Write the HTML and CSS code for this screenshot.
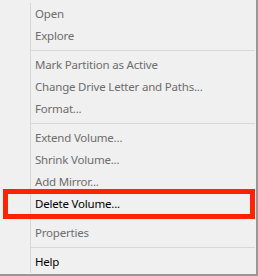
FILE: index.html
```html
<!DOCTYPE html>
<html>
<head>
<meta charset="utf-8">
<link rel="stylesheet" href="styles.css">
</head>
<body>
<div class="menu">
  <ul class="list">
    <li class="item disabled">Open</li>
    <li class="item disabled">Explore</li>
    <li class="sep"></li>
    <li class="item disabled">Mark Partition as Active</li>
    <li class="item disabled">Change Drive Letter and Paths...</li>
    <li class="item disabled">Format...</li>
    <li class="sep"></li>
    <li class="item disabled">Extend Volume...</li>
    <li class="item disabled">Shrink Volume...</li>
    <li class="item disabled">Add Mirror...</li>
    <li class="item marked">Delete Volume...<span class="highlight"></span></li>
    <li class="sep"></li>
    <li class="item disabled">Properties</li>
    <li class="sep"></li>
    <li class="item">Help</li>
  </ul>
</div>
</body>
</html>
```

FILE: styles.css
```css
html, body {
  margin: 0;
  padding: 0;
  background: #f0f0f0;
}
.menu {
  width: 256px;
  height: 271px;
  padding-top: 3px;
  border-right: 2px solid #979797;
  border-bottom: 2px solid #979797;
  background: #f0f0f0;
  font-family: "Noto Sans", "Open Sans", sans-serif;
  font-size: 11.5px;
  letter-spacing: -0.2px;
}
.list {
  list-style: none;
  margin: 0 1px 0 30px;
  padding: 0;
  border-left: 1px solid #d7d7d7;
}
.item {
  position: relative;
  height: 22px;
  line-height: 22px;
  padding-left: 4px;
  color: #000;
  white-space: nowrap;
}
.disabled {
  color: #6d6d6d;
}
.sep {
  height: 1px;
  padding: 3px 0;
  background: #d7d7d7;
  background-clip: content-box;
}
.highlight {
  position: absolute;
  top: -4px;
  bottom: -4px;
  left: -28px;
  right: 0;
  border: 5px solid #ff2400;
}
```
